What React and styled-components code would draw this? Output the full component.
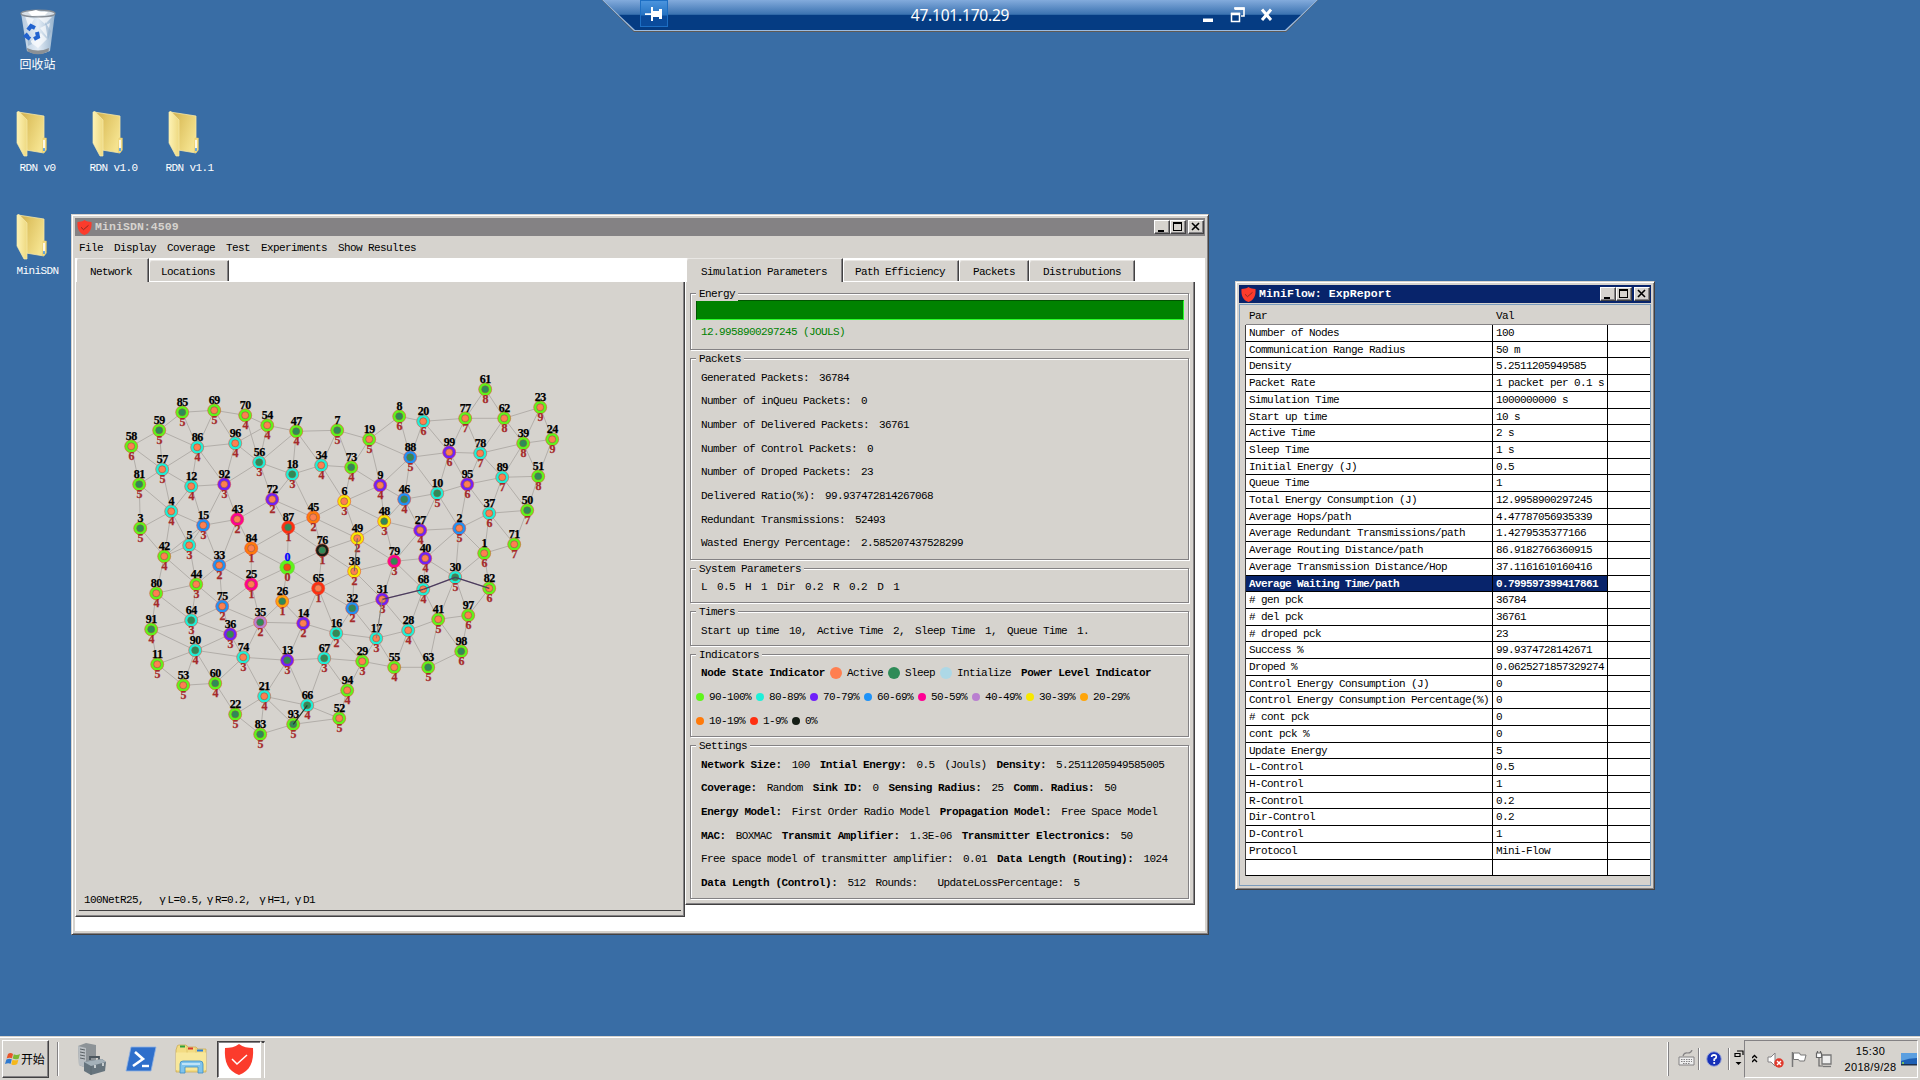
import React from "react";
import styled, { createGlobalStyle, css } from "styled-components";

const face = "#d6d3ce";
const mono = '"Liberation Mono", "Noto Sans CJK SC", monospace';
const cjk = '"Noto Sans CJK SC", "Liberation Sans", sans-serif';

const GlobalStyle = createGlobalStyle`
  * { box-sizing: border-box; }
  body { margin: 0; background: #396da5; overflow: hidden; }
`;

const Screen = styled.div`
  position: relative;
  display: flex;
  flex-direction: column;
  justify-content: space-between;
  width: 1920px;
  height: 1080px;
  background: #396da5;
  font: 11px/14px ${mono};
  letter-spacing: -0.6px;
  color: #000;
  overflow: hidden;
`;

/* ---------- desktop icons ---------- */
const IconGrid = styled.div`
  display: grid;
  grid-template-columns: repeat(3, 76px);
  grid-auto-rows: 103px;
  padding-top: 8px;
`;
const DesktopIcon = styled.div`
  grid-column: ${(p) => p.$col};
  grid-row: ${(p) => p.$row};
  display: flex;
  flex-direction: column;
  align-items: center;
  color: #fff;
  svg {
    display: block;
    margin-left: ${(p) => (p.$shift || 0)}px;
    margin-top: ${(p) => (p.$shift ? -1 : 0)}px;
  }
`;
const IconLabel = styled.span`
  margin-top: ${(p) => (p.$cjk ? 0 : 4)}px;
  margin-left: -1px;
  white-space: nowrap;
  ${(p) => p.$cjk && css`font: 12px/17px ${cjk}; letter-spacing: 0;`}
`;

const Folder = () => (
  <svg width="32" height="47" viewBox="0 0 32 47">
    <defs>
      <linearGradient id="fback" x1="0" x2="1" y1="0" y2="0.6">
        <stop offset="0" stopColor="#c9a94a" />
        <stop offset="0.4" stopColor="#e0c565" />
        <stop offset="1" stopColor="#f5e38f" />
      </linearGradient>
      <linearGradient id="ffront" x1="0" x2="1">
        <stop offset="0" stopColor="#fdf2b4" />
        <stop offset="1" stopColor="#eed981" />
      </linearGradient>
    </defs>
    <path d="M2 2 L28 6 L28 43 L10 40 Z" fill="url(#fback)" stroke="#f5e6a6" strokeWidth="0.8" />
    <path d="M27 28 h3.4 v12 l-2 2.5 h-2 z" fill="#f3dc83" stroke="#e2c766" strokeWidth="0.5" />
    <path d="M28 30 v9" stroke="#fff" strokeWidth="1.6" />
    <path d="M28 38 v3" stroke="#4a9be8" strokeWidth="1.6" />
    <path d="M1 2 L3 1.5 L11 10 L11 46 L8 46 L1 33 Z" fill="url(#ffront)" stroke="#f8ebae" strokeWidth="0.7" />
  </svg>
);

const RecycleBin = () => (
  <svg width="38" height="47" viewBox="0 0 38 47">
    <defs>
      <linearGradient id="bin" x1="0" x2="1">
        <stop offset="0" stopColor="#b4c9de" />
        <stop offset="0.5" stopColor="#e4edf6" />
        <stop offset="1" stopColor="#93b0cb" />
      </linearGradient>
    </defs>
    <path d="M2 5 L36 5 L31 43 Q19 49 8 43 Z" fill="url(#bin)" />
    <path d="M6 8 l9 3 -5 9z M17 8 l9 8 7-7z M21 20 l10-5 -3 14z M11 34 l8 6 9-9 -6-6z" fill="#fff" opacity="0.65" />
    <path d="M26 14 l6 9 -3 9z M8 24 l5 12 -4 2z" fill="#8faecb" opacity="0.6" />
    <path d="M8 40 Q19 45 30 40 L29.5 43.5 Q19 49 8.500 43.500Z" fill="#8b9095" />
    <ellipse cx="19" cy="5.500" rx="17" ry="3.400" fill="#d8e0e7" stroke="#858c94" strokeWidth="1.300" />
    <path d="M9 4 l8-2 5 2 7 0 -3 3 -13 1z" fill="#fff" />
    <g fill="none" stroke="#2263cf" strokeWidth="4">
      <path d="M9 22 l3-4 4 2" />
      <path d="M18 24 l1 5 -4 2" />
      <path d="M11 31 l-4-3 2-2" />
    </g>
  </svg>
);

const Shield = ({ w, h }) => (
  <svg width={w} height={h} viewBox="0 0 30 31" preserveAspectRatio="none">
    <path d="M15 0 C19 3 24 4 29 4 C30 18 26 27 15 31 C4 27 0 18 1 4 C6 4 11 3 15 0Z" fill="#fb3b2c" />
    <path d="M8 15 l5 5 L23 11" fill="none" stroke={w > 20 ? "#fff" : "#8c2a22"} strokeWidth={w > 20 ? 1.5 : 2} />
  </svg>
);

/* ---------- remote connection bar ---------- */
const RemoteBar = styled.div`
  position: absolute;
  left: 602px;
  top: 0;
  width: 716px;
  height: 32px;
  background: #5f5a55;
  clip-path: polygon(0 0, 100% 0, 684px 100%, 32px 100%);
`;
const RemoteLine = styled.div`
  height: 31px;
  background: #9dbce0;
  clip-path: polygon(0 0, 100% 0, 684px 100%, 32px 100%);
`;
const RemoteInner = styled.div`
  display: grid;
  grid-template-columns: 200px 1fr 200px;
  height: 30px;
  padding: 0 37px;
  background: linear-gradient(#83abdc 0, #3d74b2 14px, #2f68a8 14.500px, #053c83 15px, #053c83 100%);
  clip-path: polygon(1px 0, 715px 0, 683px 100%, 33px 100%);
`;
const PinBox = styled.div`
  display: flex;
  align-items: center;
  justify-content: center;
  width: 28px;
  height: 27px;
  margin-left: 1px;
  border: 1px solid #1d6fc4;
  background: linear-gradient(#4a94de 0, #2673c2 14px, #0a4b9c 15px);
`;
const RemoteTitle = styled.div`
  font: 15.500px/31px "Noto Sans", "Open Sans", sans-serif;
  letter-spacing: -0.2px;
  color: #fff;
  text-align: center;
`;
const RemoteButtons = styled.div`
  display: flex;
  justify-content: flex-end;
  padding-right: 8px;
`;

/* ---------- classic windows ---------- */
const Window = styled.section`
  position: absolute;
  left: ${(p) => p.$x}px;
  top: ${(p) => p.$y}px;
  width: ${(p) => p.$w}px;
  height: ${(p) => p.$h}px;
  display: flex;
  flex-direction: column;
  padding: 2px;
  background: ${face};
  border: 1px solid;
  border-color: ${face} #424142 #424142 ${face};
  box-shadow: inset 1px 1px 0 #fff, inset -1px -1px 0 #848284;
`;
const TitleBar = styled.header`
  display: flex;
  align-items: center;
  height: 18px;
  margin: 1px;
  padding: 0 1px 0 2px;
  background: ${(p) => (p.$active ? "#08246b" : "#848284")};
  color: ${(p) => (p.$active ? "#fff" : face)};
`;
const TitleText = styled.span`
  flex: 1;
  padding-left: 3px;
  font-weight: bold;
  font-size: 11.500px;
  letter-spacing: 0.08px;
  white-space: pre;
`;
const Controls = styled.div`
  display: flex;
  height: 14px;
  button:last-child { margin-left: 2px; }
`;
const ControlButton = styled.button`
  display: flex;
  width: 16px;
  height: 14px;
  padding: 0;
  background: ${face};
  border: 1px solid;
  border-color: #fff #424142 #424142 #fff;
  box-shadow: inset -1px -1px 0 #848284;
`;

const WindowControls = () => (
  <Controls>
    <ControlButton><svg width="14" height="12"><path d="M3 9h6v2H3z" /></svg></ControlButton>
    <ControlButton><svg width="14" height="12"><path d="M2 1h9v9H2z M3 3v6h7V3z" fillRule="evenodd" /></svg></ControlButton>
    <ControlButton><svg width="14" height="12"><path d="M3 2l7 7M10 2l-7 7" stroke="#000" strokeWidth="1.600" /></svg></ControlButton>
  </Controls>
);

const Menu = styled.nav`
  display: flex;
  gap: 11px;
  height: 21px;
  padding: 4px 0 0 5px;
  white-space: pre;
`;
const Workspace = styled.div`
  display: flex;
  align-items: flex-start;
  height: 673px;
  margin: 0 1px;
  background: #fff;
`;
const TabControl = styled.div`
  display: flex;
  flex-direction: column;
  width: ${(p) => p.$w}px;
  height: ${(p) => p.$h}px;
`;
const TabStrip = styled.div`
  display: flex;
  align-items: flex-end;
  height: 24px;
  padding-left: 1px;
`;
const Tab = styled.div`
  width: ${(p) => p.$w}px;
  height: ${(p) => (p.$on ? 24 : 21)}px;
  margin-bottom: ${(p) => (p.$on ? 0 : 1)}px;
  padding-top: ${(p) => (p.$on ? 6 : 4)}px;
  padding-left: ${(p) => p.$pad || 11}px;
  background: ${face};
  border-left: 1px solid #fff;
  border-top: 1px solid #e9e7e4;
  border-right: 1px solid #424142;
  border-radius: 3px 0 0 0;
  box-shadow: inset -1px 0 0 #848284;
  white-space: pre;
`;
const TabPanel = styled.div`
  flex: 1;
  display: flex;
  flex-direction: column;
  gap: 8px;
  padding: ${(p) => p.$pad || "0"};
  background: ${face};
  border-style: solid;
  border-width: 0 1px 1px 1px;
  border-color: #fff #424142 #424142 #fff;
  box-shadow: inset -1px -1px 0 #848284;
`;

/* ---------- network canvas ---------- */
const Canvas = styled.svg`
  display: block;
  width: 606px;
  height: 602px;
`;
const NodeText = styled.text`
  font: bold 12px "Liberation Serif", serif;
  letter-spacing: -0.4px;
  text-anchor: middle;
  fill: ${(p) => p.$c};
  stroke: ${(p) => p.$c};
  stroke-width: 0.25px;
`;
const StatusLine = styled.div`
  display: flex;
  height: 19px;
  margin: 0 3px 0 3px;
  padding: 1px 0 0 5px;
  border-bottom: 1px solid #424142;
  white-space: pre;
`;
const StatusItem = styled.span`
  margin-left: ${(p) => p.$gap || 0}px;
`;
const Gamma = styled.span`
  display: inline-block;
  width: 10.500px;
  text-align: center;
`;

const power = {
  90: "#5ef51a", 80: "#1df0d8", 70: "#7020fa", 60: "#1e92f8", 50: "#ff0094", 40: "#b97fd0",
  30: "#f8e800", 20: "#ffa50a", 10: "#ff7a0a", 1: "#ff2f10", 0: "#151d15",
};
const state = { a: "#ff7f50", s: "#2e8b57", k: "#f0500f", i: "#add8e6" };

const nodes = [
  [85,182,412,90,"s",5],[69,214,410,90,"a",5],[70,245,415,90,"a",4],[54,267,425,90,"a",4],
  [47,296,431,90,"s",4],[7,337,430,90,"s",5],[59,159,430,90,"s",5],[58,131,446,90,"a",6],
  [86,197,447,80,"a",4],[96,235,443,80,"a",4],[56,259,462,80,"s",3],[57,162,469,80,"a",5],
  [18,292,474,80,"s",3],[34,321,465,80,"a",4],[73,351,467,90,"s",4],[81,139,484,90,"s",5],
  [12,191,486,80,"a",4],[92,224,484,70,"a",3],[72,272,499,70,"a",2],[6,344,501,30,"a",3],
  [4,171,511,80,"a",4],[43,237,519,50,"a",2],[45,313,517,10,"a",2],[15,203,525,60,"a",3],
  [87,288,527,1,"s",1],[3,140,528,90,"s",5],[5,189,545,80,"a",3],[84,251,548,10,"a",1],
  [76,322,550,0,"s",1],[42,164,556,90,"a",4],[61,485,389,90,"s",8],[23,540,407,90,"a",9],
  [8,399,416,90,"s",6],[20,423,421,80,"a",6],[77,465,418,90,"a",7],[62,504,418,90,"a",8],
  [24,552,439,90,"a",9],[19,369,439,90,"a",5],[39,523,443,90,"s",8],[88,410,457,60,"s",5],
  [99,449,452,70,"a",6],[78,480,453,80,"a",7],[51,538,476,90,"s",8],[89,502,477,80,"a",7],
  [9,380,485,70,"a",4],[95,467,484,70,"a",6],[10,437,493,80,"s",5],[46,404,499,60,"s",4],
  [50,527,510,90,"s",7],[37,489,513,80,"a",6],[48,384,521,30,"s",3],[2,459,528,60,"a",5],
  [27,420,530,70,"a",4],[49,357,538,30,"a",2],[71,514,544,90,"a",7],[1,484,553,90,"a",6],
  [40,425,558,70,"a",4],[79,394,561,50,"s",3],[33,219,565,60,"a",2],[0,287,567,90,"k",0],
  [44,196,584,90,"a",3],[25,251,584,50,"a",1],[80,156,593,90,"a",4],[65,318,588,1,"a",1],
  [26,282,601,20,"s",1],[75,222,606,60,"a",2],[64,191,620,80,"s",3],[35,260,622,40,"s",2],
  [14,303,623,70,"a",2],[91,151,629,90,"s",4],[36,230,634,70,"s",3],[16,336,633,80,"s",2],
  [90,195,650,80,"s",4],[74,243,657,80,"a",3],[13,287,660,70,"s",3],[67,324,658,80,"s",3],
  [11,157,664,90,"a",5],[53,183,685,90,"a",5],[60,215,683,90,"s",4],[21,264,696,80,"a",4],
  [66,307,705,80,"s",4],[94,347,690,90,"a",4],[22,235,714,90,"s",5],[93,293,724,90,"s",5],
  [52,339,718,90,"a",5],[83,260,734,90,"s",5],[38,354,571,30,"a",2],[30,455,577,80,"s",5],
  [82,489,588,90,"a",6],[68,423,589,80,"a",4],[31,382,599,70,"a",3],[32,352,608,60,"s",2],
  [97,468,615,90,"a",6],[41,438,619,90,"a",5],[28,408,630,80,"a",4],[17,376,638,80,"a",3],
  [98,461,651,90,"s",6],[29,362,661,90,"a",3],[55,394,667,90,"a",4],[63,428,667,90,"s",5],
];
const at = Object.fromEntries(nodes.map((n) => [n[0], n]));

const edges = `58-59 58-57 58-81 59-85 59-57 59-86 85-69 85-86 69-86 69-96 69-70 70-54 70-56 54-47 54-56
47-56 47-7 47-18 47-34 7-34 7-73 7-19 86-96 86-57 86-12 86-92 96-56 96-92 54-96 56-92 56-18 56-72 18-34
18-72 18-45 34-73 34-6 73-6 73-19 73-9 57-81 57-12 57-4 81-4 81-3 12-92 12-4 12-15 92-15 92-43 4-15 4-3
4-42 4-5 3-42 15-43 15-5 15-33 15-42 5-42 5-33 43-72 43-84 43-33 72-87 72-45 87-45 87-84 87-76 87-0 45-6
45-76 45-49 84-33 84-25 84-0 76-49 76-0 76-65 76-38 6-49 6-48 6-9 8-19 8-20 8-88 20-88 20-77 20-99 77-61
77-62 77-99 77-78 61-62 62-23 62-78 62-39 23-39 23-24 24-39 24-51 39-51 39-78 39-89 99-88 99-78 99-10
99-95 78-95 78-89 88-19 88-9 88-46 88-10 19-9 9-46 9-48 46-48 46-10 46-27 10-95 10-27 10-2 95-89 95-2
95-37 89-51 89-37 89-50 51-50 37-50 37-2 37-1 37-71 50-71 71-1 2-27 2-1 2-30 2-40 27-79 27-40 27-48
48-49 48-79 49-79 49-38 40-79 1-30 1-82 40-30 40-68 79-68 79-38 79-31 42-80 42-44 5-44 33-44 33-25
33-75 44-80 44-64 44-75 80-91 80-64 25-0 25-75 25-35 0-26 0-65 26-65 26-35 26-14 65-38 65-14 65-32 65-16
64-91 64-75 64-90 64-36 75-36 75-35 35-36 35-14 35-74 35-13 36-90 36-74 14-13 14-16 91-90 91-11 90-11
90-53 90-60 90-74 11-53 53-60 60-74 60-22 74-13 74-21 13-67 13-21 13-66 67-16 67-66 67-29 67-94 16-32
16-17 16-29 22-21 22-83 21-66 21-93 21-83 83-93 93-66 93-52 66-52 66-94 94-52 94-29 38-32 38-31 32-31
32-17 31-28 31-17 31-68 68-30 68-28 68-41 30-41 30-97 30-82 82-97 97-41 97-98 41-28 41-98 41-63 28-17
28-55 28-63 17-29 17-55 29-55 55-63 63-98`.split(/\s+/);

const routes = [
  ["31-68", "#4c3b5e", 1.3], ["68-30", "#4c3b5e", 1.3], ["30-82", "#4c3b5e", 1.3],
  ["93-66", "#26382e", 1.2], ["49-38", "#6c6764", 1], ["31-17", "#85827f", 1],
];

const Link = ({ pair, color, width }) => {
  const [a, b] = pair.split("-").map((id) => at[id]);
  return <line x1={a[1] + 0.3} y1={a[2] + 0.3} x2={b[1] + 0.3} y2={b[2] + 0.3} stroke={color} strokeWidth={width} />;
};

const Network = () => (
  <Canvas viewBox="76 282 606 602">
    {edges.map((e) => <Link key={e} pair={e} color="#b2aea9" width={1} />)}
    {nodes.map(([id, x, y, lvl, st, hops]) => (
      <g key={id}>
        <circle cx={x + 0.2} cy={y + 0.3} r={id === 0 ? 7.3 : 6.5} fill={power[lvl]} stroke={id === 0 ? "#6ecf3a" : "#e8503c"} strokeWidth="0.6" />
        <circle cx={x + 0.2} cy={y + 0.3} r="3.500" fill={state[st]} stroke="#8a5a44" strokeWidth="0.6" />
        <NodeText x={x + 0.300} y={y - 6.300} $c={id === 0 ? "#0000ff" : "#000"}>{id}</NodeText>
        <NodeText x={x + 0.300} y={y + 13.900} $c="#a52a2a">{hops}</NodeText>
      </g>
    ))}
    {routes.map(([e, c, w]) => <Link key={e} pair={e} color={c} width={w} />)}
  </Canvas>
);

/* ---------- parameter groups ---------- */
const GroupBox = styled.div`
  position: relative;
  height: ${(p) => p.$h}px;
  padding: ${(p) => p.$top}px 5px 0;
  border: 1px solid #848284;
  box-shadow: 1px 1px 0 #fff, inset 1px 1px 0 #fff;
`;
const Legend = styled.span`
  position: absolute;
  left: 5px;
  top: -6px;
  height: 13px;
  line-height: 13px;
  padding: 0 3px;
  background: ${face};
  white-space: pre;
`;
const Line = styled.div`
  display: flex;
  align-items: center;
  height: 23.670px;
`;
const Seg = styled.span`
  padding: 0 5px;
  white-space: pre;
  ${(p) => p.$b && css`font-weight: bold; letter-spacing: -0.4px;`}
  ${(p) => p.$green && css`color: #008200;`}
`;
const EnergyBar = styled.div`
  height: 20px;
  background: #008200;
  border: 1px solid;
  border-color: #005500 #29ff29 #29ff29 #005500;
  margin-right: -1px;
`;
const Dot = styled.i`
  width: ${(p) => p.$d}px;
  height: ${(p) => p.$d}px;
  flex: none;
  border-radius: 50%;
  background: ${(p) => p.$c};
`;

const Group = ({ title, h, top, children }) => (
  <GroupBox $h={h} $top={top}>
    <Legend>{title}</Legend>
    {children}
  </GroupBox>
);
/* A leading "*" marks a bold caption. */
const Row = ({ items }) => (
  <Line>
    {items.map((t, i) => <Seg key={i} $b={t[0] === "*"}>{t.replace(/^\*/, "")}</Seg>)}
  </Line>
);

const packets = [
  ["Generated Packets:", "36784"], ["Number of inQueu Packets:", "0"], ["Number of Delivered Packets:", "36761"],
  ["Number of Control Packets:", "0"], ["Number of Droped Packets:", "23"], ["Delivered Ratio(%):", "99.937472814267068"],
  ["Redundant Transmissions:", "52493"], ["Wasted Energy Percentage:", "2.585207437528299"],
];
const settings = [
  ["*Network Size:", "100", "*Intial Energy:", "0.5", "(Jouls)", "*Density:", "5.2511205949585005"],
  ["*Coverage:", "Random", "*Sink ID:", "0", "*Sensing Radius:", "25", "*Comm. Radius:", "50"],
  ["*Energy Model:", "First Order Radio Model", "*Propagation Model:", "Free Space Model"],
  ["*MAC:", "BOXMAC", "*Transmit Amplifier:", "1.3E-06", "*Transmitter Electronics:", "50"],
  ["Free space model of transmitter amplifier:", "0.01", "*Data Length (Routing):", "1024"],
  ["*Data Length (Control):", "512", "Rounds:", "", "UpdateLossPercentage:", "5"],
];
const levels = [
  [[90, "90-100%"], [80, "80-89%"], [70, "70-79%"], [60, "60-69%"], [50, "50-59%"], [40, "40-49%"], [30, "30-39%"], [20, "20-29%"]],
  [[10, "10-19%"], [1, "1-9%"], [0, "0%"]],
];

/* ---------- report table ---------- */
const ReportBody = styled.div`
  flex: 1;
  margin: 0 1px 1px;
  padding: 2px 0 0 6px;
  border: 1px solid #7b9cbd;
`;
const Cells = styled.div`
  display: grid;
  grid-template-columns: 247px 115px 1fr;
  white-space: pre;
`;
const HeadCell = styled.div`
  height: 18px;
  padding: 2px 0 0 3px;
  border-bottom: 1px solid #848284;
`;
const Cell = styled.div`
  height: 16.710px;
  padding: 1px 0 0 3px;
  overflow: hidden;
  background: ${(p) => (p.$on ? "#08246b" : "#fff")};
  color: ${(p) => (p.$on ? "#fff" : "#000")};
  font-weight: ${(p) => (p.$on ? "bold" : "normal")};
  border-bottom: 1px solid #000;
  border-right: ${(p) => (p.$last ? 0 : 1)}px solid #000;
  box-shadow: ${(p) => (p.$first ? "-1px 0 0 #424142" : "none")};
`;

const report = [
  ["Number of Nodes", "100"], ["Communication Range Radius", "50 m"], ["Density", "5.2511205949585"],
  ["Packet Rate", "1 packet per 0.1 s"], ["Simulation Time", "1000000000 s"], ["Start up time", "10 s"],
  ["Active Time", "2 s"], ["Sleep Time", "1 s"], ["Initial Energy (J)", "0.5"], ["Queue Time", "1"],
  ["Total Energy Consumption (J)", "12.9958900297245"], ["Average Hops/path", "4.47787056935339"],
  ["Average Redundant Transmissions/path", "1.4279535377166"], ["Average Routing Distance/path", "86.9182766360915"],
  ["Average Transmission Distance/Hop", "37.1161610160416"], ["Average Waiting Time/path", "0.799597399417861"],
  ["# gen pck", "36784"], ["# del pck", "36761"], ["# droped pck", "23"], ["Success %", "99.9374728142671"],
  ["Droped %", "0.0625271857329274"], ["Control Energy Consumption (J)", "0"],
  ["Control Energy Consumption Percentage(%)", "0"], ["# cont pck", "0"], ["cont pck %", "0"], ["Update Energy", "5"],
  ["L-Control", "0.5"], ["H-Control", "1"], ["R-Control", "0.2"], ["Dir-Control", "0.2"], ["D-Control", "1"],
  ["Protocol", "Mini-Flow"], ["", ""],
];

/* ---------- taskbar ---------- */
const Taskbar = styled.footer`
  display: flex;
  justify-content: space-between;
  height: 44px;
  padding: 3px 2px 2px;
  background: ${face};
  border-top: 1px solid ${face};
  box-shadow: inset 0 1px 0 #fff;
`;
const BarSide = styled.div`
  display: flex;
  align-items: center;
`;
const StartButton = styled.div`
  display: flex;
  align-items: center;
  width: 47px;
  height: 38px;
  padding-left: 2px;
  border: 1px solid;
  border-color: #fff #424142 #424142 #fff;
  box-shadow: inset -1px -1px 0 #848284;
  font: 12px/16px ${cjk};
  letter-spacing: -0.3px;
`;
const Divider = styled.div`
  width: 2px;
  height: ${(p) => p.$h}px;
  margin: 0 ${(p) => p.$r}px 0 ${(p) => p.$l}px;
  background: linear-gradient(90deg, ${(p) => (p.$flip ? "#fff 50%, #848284 50%" : "#848284 50%, #fff 50%")});
`;
const Launcher = styled.div`
  width: ${(p) => p.$w || 50}px;
  display: flex;
  svg { display: block; }
`;
const ActiveTask = styled.div`
  display: flex;
  align-items: center;
  justify-content: center;
  width: 44px;
  height: 37px;
  margin-left: -8px;
  background: #fff;
  border: 1px solid;
  border-color: #424142 #fff #fff #424142;
  box-shadow: inset 1px 1px 0 #848284;
`;
const TaskEdge = styled.div`
  width: 4px;
  height: 37px;
  border-top: 2px solid #424142;
  border-right: 1px solid #fff;
  border-left: 1px solid ${face};
`;
const Tray = styled.div`
  display: flex;
  align-items: center;
  width: 174px;
  height: 38px;
  padding-left: 7px;
  border: 1px solid;
  border-color: #848284 #fff #fff #848284;
`;
const Clock = styled.div`
  width: 76px;
  padding-left: 1px;
  text-align: center;
  font: 11px/16px "Liberation Sans", sans-serif;
  letter-spacing: 0.35px;
`;

const WinLogo = () => (
  <svg width="16" height="16" viewBox="0 0 16 16">
    <path d="M3 3 Q5.500 1 8 3 L7 7.300 Q4.500 6 1.600 7.500Z" fill="#e8552a" />
    <path d="M8.800 3.300 Q11.500 5 15 3 L13.600 7.700 Q10.500 9 7.700 7.600Z" fill="#7cb832" />
    <path d="M1.400 8.500 Q4.500 7 6.800 8.300 L5.700 12.800 Q3.200 11.500 0 13Z" fill="#2f79cf" />
    <path d="M7.500 8.700 Q10.500 10 13.400 8.700 L12.200 13 Q9.500 15 6.300 13.200Z" fill="#f5b81c" />
  </svg>
);

const ServerIcon = () => (
  <svg width="32" height="32" viewBox="0 0 32 32">
    <path d="M2 3 L10 0 L20 2 L20 20 L10 25 L3 22Z" fill="#8d9397" />
    <path d="M2 3 L10 5 L10 25 L3 22Z" fill="#b9bec2" />
    <path d="M4 6l5 1M4 9l5 1M4 12l5 1M4 15l5 1" stroke="#5b6266" strokeWidth="1" />
    <path d="M14 17 v-3 h9 v3" fill="none" stroke="#4c565d" strokeWidth="1.800" />
    <path d="M8 19 L26 16 L30 19 L29 28 L15 32 L8 28Z" fill="#66747d" />
    <path d="M8 19 L26 16 L30 19 L15 23Z" fill="#a4b1b9" />
    <path d="M15 23 v9" stroke="#5c6a73" /><path d="M19 22v3M27 20v3" stroke="#e2e6e8" strokeWidth="1.500" />
  </svg>
);

const PowerShellIcon = () => (
  <svg width="32" height="26" viewBox="0 0 32 26">
    <path d="M6 1 H31 L26 25 H1Z" fill="#2f6fcb" stroke="#8fb2e4" strokeWidth="0.800" />
    <path d="M10 6 L18 13 L8 20" fill="none" stroke="#fff" strokeWidth="2.600" />
    <path d="M17 20h7" stroke="#fff" strokeWidth="2.400" />
  </svg>
);

const ExplorerIcon = () => (
  <svg width="33" height="30" viewBox="0 0 33 30">
    <path d="M2 3 q0-2 2-2 h7 l2 2 h8 l2 2 h8 v23 H1 V6z" fill="#f3dc83" stroke="#c9a84a" strokeWidth="0.700" />
    <path d="M5 2.500h5" stroke="#2da03c" strokeWidth="2" /><path d="M13 4.500h5" stroke="#d9382d" strokeWidth="2" /><path d="M22 6.500h6" stroke="#2c7fd6" strokeWidth="2" />
    <path d="M1 8.500 h30 v17.500 H1z" fill="#f8e79a" />
    <path d="M12 1.500v7M21 3.500v5" stroke="#dcbf62" strokeWidth="0.800" />
    <path d="M5 29 V20 q0-3 3-3 h17 q3 0 3 3 v9 h-5 v-6 H10 v6z" fill="#7fc3ec" stroke="#3c8dc4" strokeWidth="0.800" />
    <path d="M7 20h18" stroke="#d5eefb" strokeWidth="1.500" />
  </svg>
);

export default function App() {
  return (
    <Screen>
      <GlobalStyle />
      <IconGrid>
        <DesktopIcon $col={1} $row={1}><RecycleBin /><IconLabel $cjk>回收站</IconLabel></DesktopIcon>
        <DesktopIcon $col={1} $row={2} $shift={-12}><Folder /><IconLabel>RDN v0</IconLabel></DesktopIcon>
        <DesktopIcon $col={2} $row={2} $shift={-12}><Folder /><IconLabel>RDN v1.0</IconLabel></DesktopIcon>
        <DesktopIcon $col={3} $row={2} $shift={-12}><Folder /><IconLabel>RDN v1.1</IconLabel></DesktopIcon>
        <DesktopIcon $col={1} $row={3} $shift={-12}><Folder /><IconLabel>MiniSDN</IconLabel></DesktopIcon>
      </IconGrid>

      <RemoteBar>
        <RemoteLine>
          <RemoteInner>
            <PinBox>
              <svg width="18" height="14" viewBox="0 0 18 14">
                <path d="M0 6.300h7v1.600H0z M6 0h2v14H6z M8 4h6v6H8z M14 2h3v10h-3z" fill="#fff" />
              </svg>
            </PinBox>
            <RemoteTitle>47.101.170.29</RemoteTitle>
            <RemoteButtons>
              <svg width="72" height="28" viewBox="0 0 72 28">
                <path d="M2 18.500h10v3.500H2z" fill="#fff" />
                <path d="M34 9V8h9v8h-3" fill="none" stroke="#fff" strokeWidth="1.600" />
                <path d="M33.500 8.700h10" stroke="#fff" strokeWidth="2.500" />
                <path d="M30.500 13.500h8v8h-8z" fill="#053c83" stroke="#fff" strokeWidth="1.500" />
                <path d="M30 14h9" stroke="#fff" strokeWidth="2.500" />
                <path d="M61 9.500l9 10.500M70 9.500l-9 10.500" stroke="#fff" strokeWidth="3" />
              </svg>
            </RemoteButtons>
          </RemoteInner>
        </RemoteLine>
      </RemoteBar>

      <Window $x={71} $y={214} $w={1138} $h={721}>
        <TitleBar><Shield w={15} h={15} /><TitleText>MiniSDN:4509</TitleText><WindowControls /></TitleBar>
        <Menu>
          {["File", "Display", "Coverage", "Test", "Experiments", "Show Resultes"].map((m) => <span key={m}>{m}</span>)}
        </Menu>
        <Workspace>
          <TabControl $w={610} $h={659}>
            <TabStrip><Tab $on $w={73} $pad={13}>Network</Tab><Tab $w={80}>Locations</Tab></TabStrip>
            <TabPanel>
              <Network />
              <StatusLine>
                <StatusItem>100NetR25,</StatusItem>
                <StatusItem $gap={13}><Gamma>γ</Gamma>L=0.5,</StatusItem>
                <StatusItem $gap={1}><Gamma>γ</Gamma>R=0.2,</StatusItem>
                <StatusItem $gap={6}><Gamma>γ</Gamma>H=1,</StatusItem>
                <StatusItem $gap={1}><Gamma>γ</Gamma>D1</StatusItem>
              </StatusLine>
            </TabPanel>
          </TabControl>
          <TabControl $w={510} $h={647}>
            <TabStrip>
              <Tab $on $w={157} $pad={14}>Simulation Parameters</Tab>
              <Tab $w={116} $pad={11}>Path Efficiency</Tab>
              <Tab $w={70} $pad={13}>Packets</Tab>
              <Tab $w={106} $pad={13}>Distrubutions</Tab>
            </TabStrip>
            <TabPanel $pad="11px 5px 0 4px">
              <Group title="Energy" h={57} top={6}>
                <EnergyBar />
                <Line><Seg $green>12.9958900297245 (JOULS)</Seg></Line>
              </Group>
              <Group title="Packets" h={202} top={7}>{packets.map((r) => <Row key={r[0]} items={r} />)}</Group>
              <Group title="System Parameters" h={35} top={6}>
                <Row items={["L", "0.5", "H", "1", "Dir", "0.2", "R", "0.2", "D", "1"]} />
              </Group>
              <Group title="Timers" h={35} top={7}>
                <Row items={["Start up time", "10,", "Active Time", "2,", "Sleep Time", "1,", "Queue Time", "1."]} />
              </Group>
              <Group title="Indicators" h={83} top={6.5}>
                <Line>
                  <Seg $b>Node State Indicator</Seg>
                  <Dot $d={12} $c={state.a} /><Seg>Active</Seg>
                  <Dot $d={12} $c={state.s} /><Seg>Sleep</Seg>
                  <Dot $d={12} $c={state.i} /><Seg>Intialize</Seg>
                  <Seg $b>Power Level Indicator</Seg>
                </Line>
                {levels.map((row, i) => (
                  <Line key={i}>
                    {row.map(([l, t]) => <React.Fragment key={t}><Dot $d={8} $c={power[l]} /><Seg>{t}</Seg></React.Fragment>)}
                  </Line>
                ))}
              </Group>
              <Group title="Settings" h={154} top={7}>{settings.map((r) => <Row key={r[0]} items={r} />)}</Group>
            </TabPanel>
          </TabControl>
        </Workspace>
      </Window>

      <Window $x={1235} $y={281} $w={420} $h={609}>
        <TitleBar $active><Shield w={15} h={15} /><TitleText>MiniFlow: ExpReport</TitleText><WindowControls /></TitleBar>
        <ReportBody>
          <Cells>
            <HeadCell>Par</HeadCell><HeadCell>Val</HeadCell><HeadCell />
            {report.map(([k, v], i) => (
              <React.Fragment key={i}>
                <Cell $first $on={i === 15}>{k}</Cell>
                <Cell $on={i === 15}>{v}</Cell>
                <Cell $last />
              </React.Fragment>
            ))}
          </Cells>
        </ReportBody>
      </Window>

      <Taskbar>
        <BarSide>
          <StartButton><WinLogo />开始</StartButton>
          <Divider $h={34} $l={8} $r={17} />
          <Launcher $w={49}><ServerIcon /></Launcher>
          <Launcher><PowerShellIcon /></Launcher>
          <Launcher><ExplorerIcon /></Launcher>
          <ActiveTask><Shield w={30} h={31} /></ActiveTask>
          <TaskEdge />
        </BarSide>
        <BarSide>
          <Divider $h={34} $l={0} $r={9} $flip />
          <svg width="18" height="18" viewBox="0 0 18 18">
            <path d="M1 7h15v8H1z" fill="#eee" stroke="#848284" />
            <path d="M3 9.500h11M3 11.500h11M5 13.500h7" stroke="#848284" strokeDasharray="1.500 1" />
            <path d="M5 6 q1-4 5-3 q3 0 4-3" fill="none" stroke="#848284" strokeWidth="1.200" />
          </svg>
          <Divider $h={22} $l={2} $r={6} />
          <svg width="16" height="16" viewBox="0 0 16 16">
            <circle cx="8" cy="8" r="7.300" fill="#1731b8" stroke="#9fa9d8" strokeWidth="1" />
            <path d="M5.600 6 Q5.700 3.800 8 3.800 Q10.400 3.900 10.300 6 Q10.200 7.300 8.200 8.300 V10" fill="none" stroke="#fff" strokeWidth="1.700" />
            <circle cx="8.200" cy="12" r="1.100" fill="#fff" />
          </svg>
          <Divider $h={22} $l={6} $r={4} />
          <svg width="10" height="18" viewBox="0 0 10 18">
            <path d="M3 1h6v4M1 3.500h5v3H1z" fill="none" stroke="#000" strokeWidth="1.200" />
            <path d="M1.500 12h6l-3 3z" />
          </svg>
          <Tray>
            <svg width="80" height="20" viewBox="0 0 80 20">
              <path d="M0 9l2.500-2.500L5 9M0 13l2.500-2.500L5 13" fill="none" stroke="#000" strokeWidth="1.400" />
              <path d="M16 8h3l4-4v13l-4-4h-3z" fill="#fff" stroke="#848284" />
              <circle cx="27" cy="14" r="4.700" fill="#e03a2c" />
              <path d="M25 12l4 4M29 12l-4 4" stroke="#fff" strokeWidth="1.400" />
              <path d="M40.500 3v15" stroke="#777" strokeWidth="1.500" />
              <path d="M41.500 4h6l1 2h5.500l-1.500 6h-5l-1-1.500h-5z" fill="#fff" stroke="#777" />
              <path d="M70 6h9v9H70z" fill="#eee" stroke="#777" strokeWidth="1.300" />
              <path d="M71 17.500h8" stroke="#777" strokeWidth="1.300" />
              <path d="M64.500 4h5v4.500h-5z" fill="#fff" stroke="#666" strokeWidth="1.200" />
              <path d="M65.500 4v-2M68.500 4v-2M67 8.500v8.500h4" fill="none" stroke="#666" strokeWidth="1.200" />
            </svg>
            <Clock>15:30<br />2018/9/28</Clock>
            <svg width="16" height="14" viewBox="0 0 16 14" style={{ flex: "none", marginLeft: -7 }}>
              <path d="M0 1h16v11H0z" fill="#1d5fb4" />
              <path d="M0 1h16v5q-8 0-16 3z" fill="#5b9fe0" />
              <path d="M0 12h16v1.500H0z" fill="#1c2f4a" /><path d="M1 11h2" stroke="#8fdc4a" strokeWidth="1.500" />
            </svg>
          </Tray>
        </BarSide>
      </Taskbar>
    </Screen>
  );
}
